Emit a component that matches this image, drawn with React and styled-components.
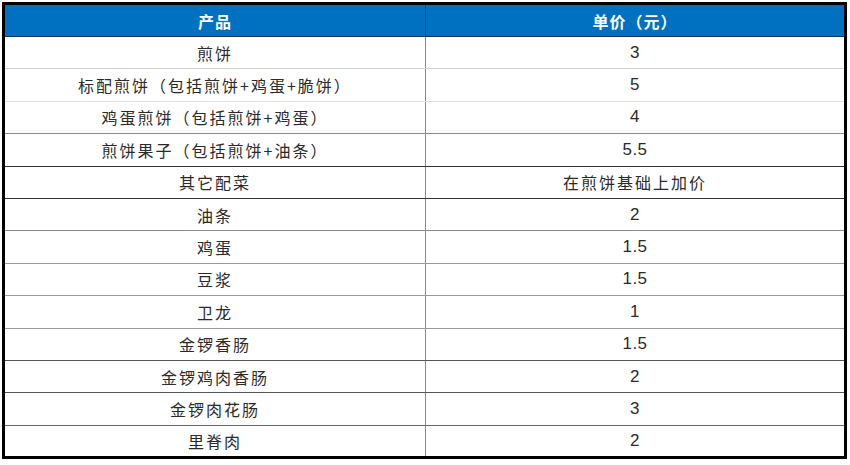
import React from 'react';
import styled, { createGlobalStyle } from 'styled-components';

const GlobalStyle = createGlobalStyle`
  html, body {
    margin: 0;
    padding: 0;
    background: #ffffff;
  }
  body {
    padding: 2px 3px 0 2px;
    font-family: "Liberation Sans", "Noto Sans CJK SC", sans-serif;
  }
`;

const rows = [
  { name: '煎饼', price: '3', line: '#d0d0d0' },
  { name: '标配煎饼（包括煎饼+鸡蛋+脆饼）', price: '5', line: '#e0e0e0' },
  { name: '鸡蛋煎饼（包括煎饼+鸡蛋）', price: '4', line: '#8a8a8a' },
  { name: '煎饼果子（包括煎饼+油条）', price: '5.5', line: '#333333' },
  { name: '其它配菜', price: '在煎饼基础上加价', line: '#333333', cjk: true },
  { name: '油条', price: '2', line: '#8a8a8a' },
  { name: '鸡蛋', price: '1.5', line: '#9a9a9a' },
  { name: '豆浆', price: '1.5', line: '#9a9a9a' },
  { name: '卫龙', price: '1', line: '#9a9a9a' },
  { name: '金锣香肠', price: '1.5', line: '#555555' },
  { name: '金锣鸡肉香肠', price: '2', line: '#555555' },
  { name: '金锣肉花肠', price: '3', line: '#666666' },
  { name: '里脊肉', price: '2', line: 'transparent' },
];

const Table = styled.table`
  width: 845px;
  border-collapse: collapse;
  border: 3px solid #000;
  table-layout: fixed;
`;

const Th = styled.th`
  height: 31px;
  padding: 0;
  background: #0070c0;
  color: #ffffff;
  font-family: "Noto Sans CJK SC", sans-serif;
  font-weight: 700;
  font-size: 16px;
  letter-spacing: 1px;
  border-bottom: 1px solid #1a3550;
  border-right: ${(p) => (p.$last ? 'none' : '1px solid #15406a')};
`;

const Tr = styled.tr`
  height: 32.4px;
`;

const Td = styled.td`
  padding: 0;
  text-align: center;
  color: #2a2a2a;
  font-size: ${(p) => (p.$num ? '17px' : '16px')};
  letter-spacing: ${(p) => (p.$num ? '0.5px' : '2px')};
  font-family: ${(p) =>
    p.$num ? '"Liberation Sans", "Noto Sans CJK SC", sans-serif' : '"Noto Sans CJK SC", sans-serif'};
  border-bottom: 1px solid ${(p) => p.$line};
  border-right: ${(p) => (p.$last ? 'none' : '1px solid #888888')};
`;

export default function App() {
  return (
    <>
      <GlobalStyle />
      <Table>
        <colgroup>
          <col style={{ width: '422px' }} />
          <col />
        </colgroup>
        <thead>
          <tr>
            <Th>产品</Th>
            <Th $last>单价（元）</Th>
          </tr>
        </thead>
        <tbody>
          {rows.map((r) => (
            <Tr key={r.name}>
              <Td $line={r.line}>{r.name}</Td>
              <Td $line={r.line} $num={!r.cjk} $last>
                {r.price}
              </Td>
            </Tr>
          ))}
        </tbody>
      </Table>
    </>
  );
}
